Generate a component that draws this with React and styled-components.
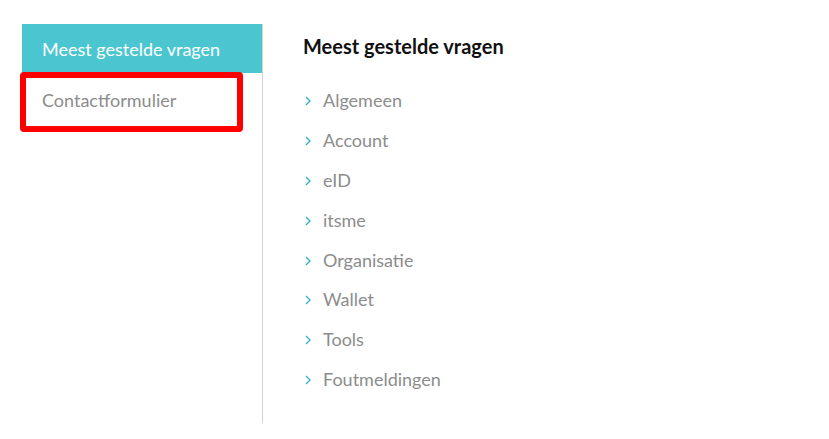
import React from "react"
import styled, { createGlobalStyle } from "styled-components"

const Global = createGlobalStyle`
  body {
    margin: 0;
    background: #fff;
    font-family: Lato, "Open Sans", sans-serif;
  }
`

const Page = styled.div`
  display: flex;
  padding: 24px 0 0 22px;
`

const Sidebar = styled.nav`
  width: 240px;
  height: 399px;
  border-right: 1px solid #d3d3d3;
  display: flex;
  flex-direction: column;
`

const SideItem = styled.div`
  position: relative;
  height: ${props => props.h}px;
  display: flex;
  align-items: center;
  padding-left: 20px;
  font-size: 18px;
  color: ${props => (props.active ? "#fff" : "#8c8c8c")};
  background: ${props => (props.active ? "#4bc6d1" : "transparent")};
`

const Highlight = styled.div`
  position: absolute;
  top: -1px;
  left: -2px;
  right: 19px;
  bottom: -6px;
  border: 6px solid #ff0000;
  border-radius: 4px;
`

const Main = styled.main`
  padding: 9px 0 0 40px;
`

const Title = styled.h2`
  margin: 0 0 21px;
  font-size: 20px;
  font-weight: 700;
  color: #111;
  line-height: 26px;
`

const List = styled.ul`
  list-style: none;
  margin: 0;
  padding: 0;
`

const Item = styled.li`
  display: flex;
  align-items: center;
  height: 39.9px;
  font-size: 18px;
  color: #8c8c8c;
`

const Chevron = styled.svg`
  width: 6px;
  height: 10px;
  margin: 2px 12px 0 2px;
  flex-shrink: 0;
`

const items = [
  "Algemeen",
  "Account",
  "eID",
  "itsme",
  "Organisatie",
  "Wallet",
  "Tools",
  "Foutmeldingen",
]

const App = () => {
  return (
    <Page>
      <Global />
      <Sidebar>
        <SideItem active h={49}>Meest gestelde vragen</SideItem>
        <SideItem h={53}>
          Contactformulier
          <Highlight />
        </SideItem>
      </Sidebar>
      <Main>
        <Title>Meest gestelde vragen</Title>
        <List>
          {items.map(name => (
            <Item key={name}>
              <Chevron viewBox="0 0 6 10">
                <path d="M1 1 L5 5 L1 9" fill="none" stroke="#3bb3c8" strokeWidth="1.4" />
              </Chevron>
              {name}
            </Item>
          ))}
        </List>
      </Main>
    </Page>
  )
}

export default App
